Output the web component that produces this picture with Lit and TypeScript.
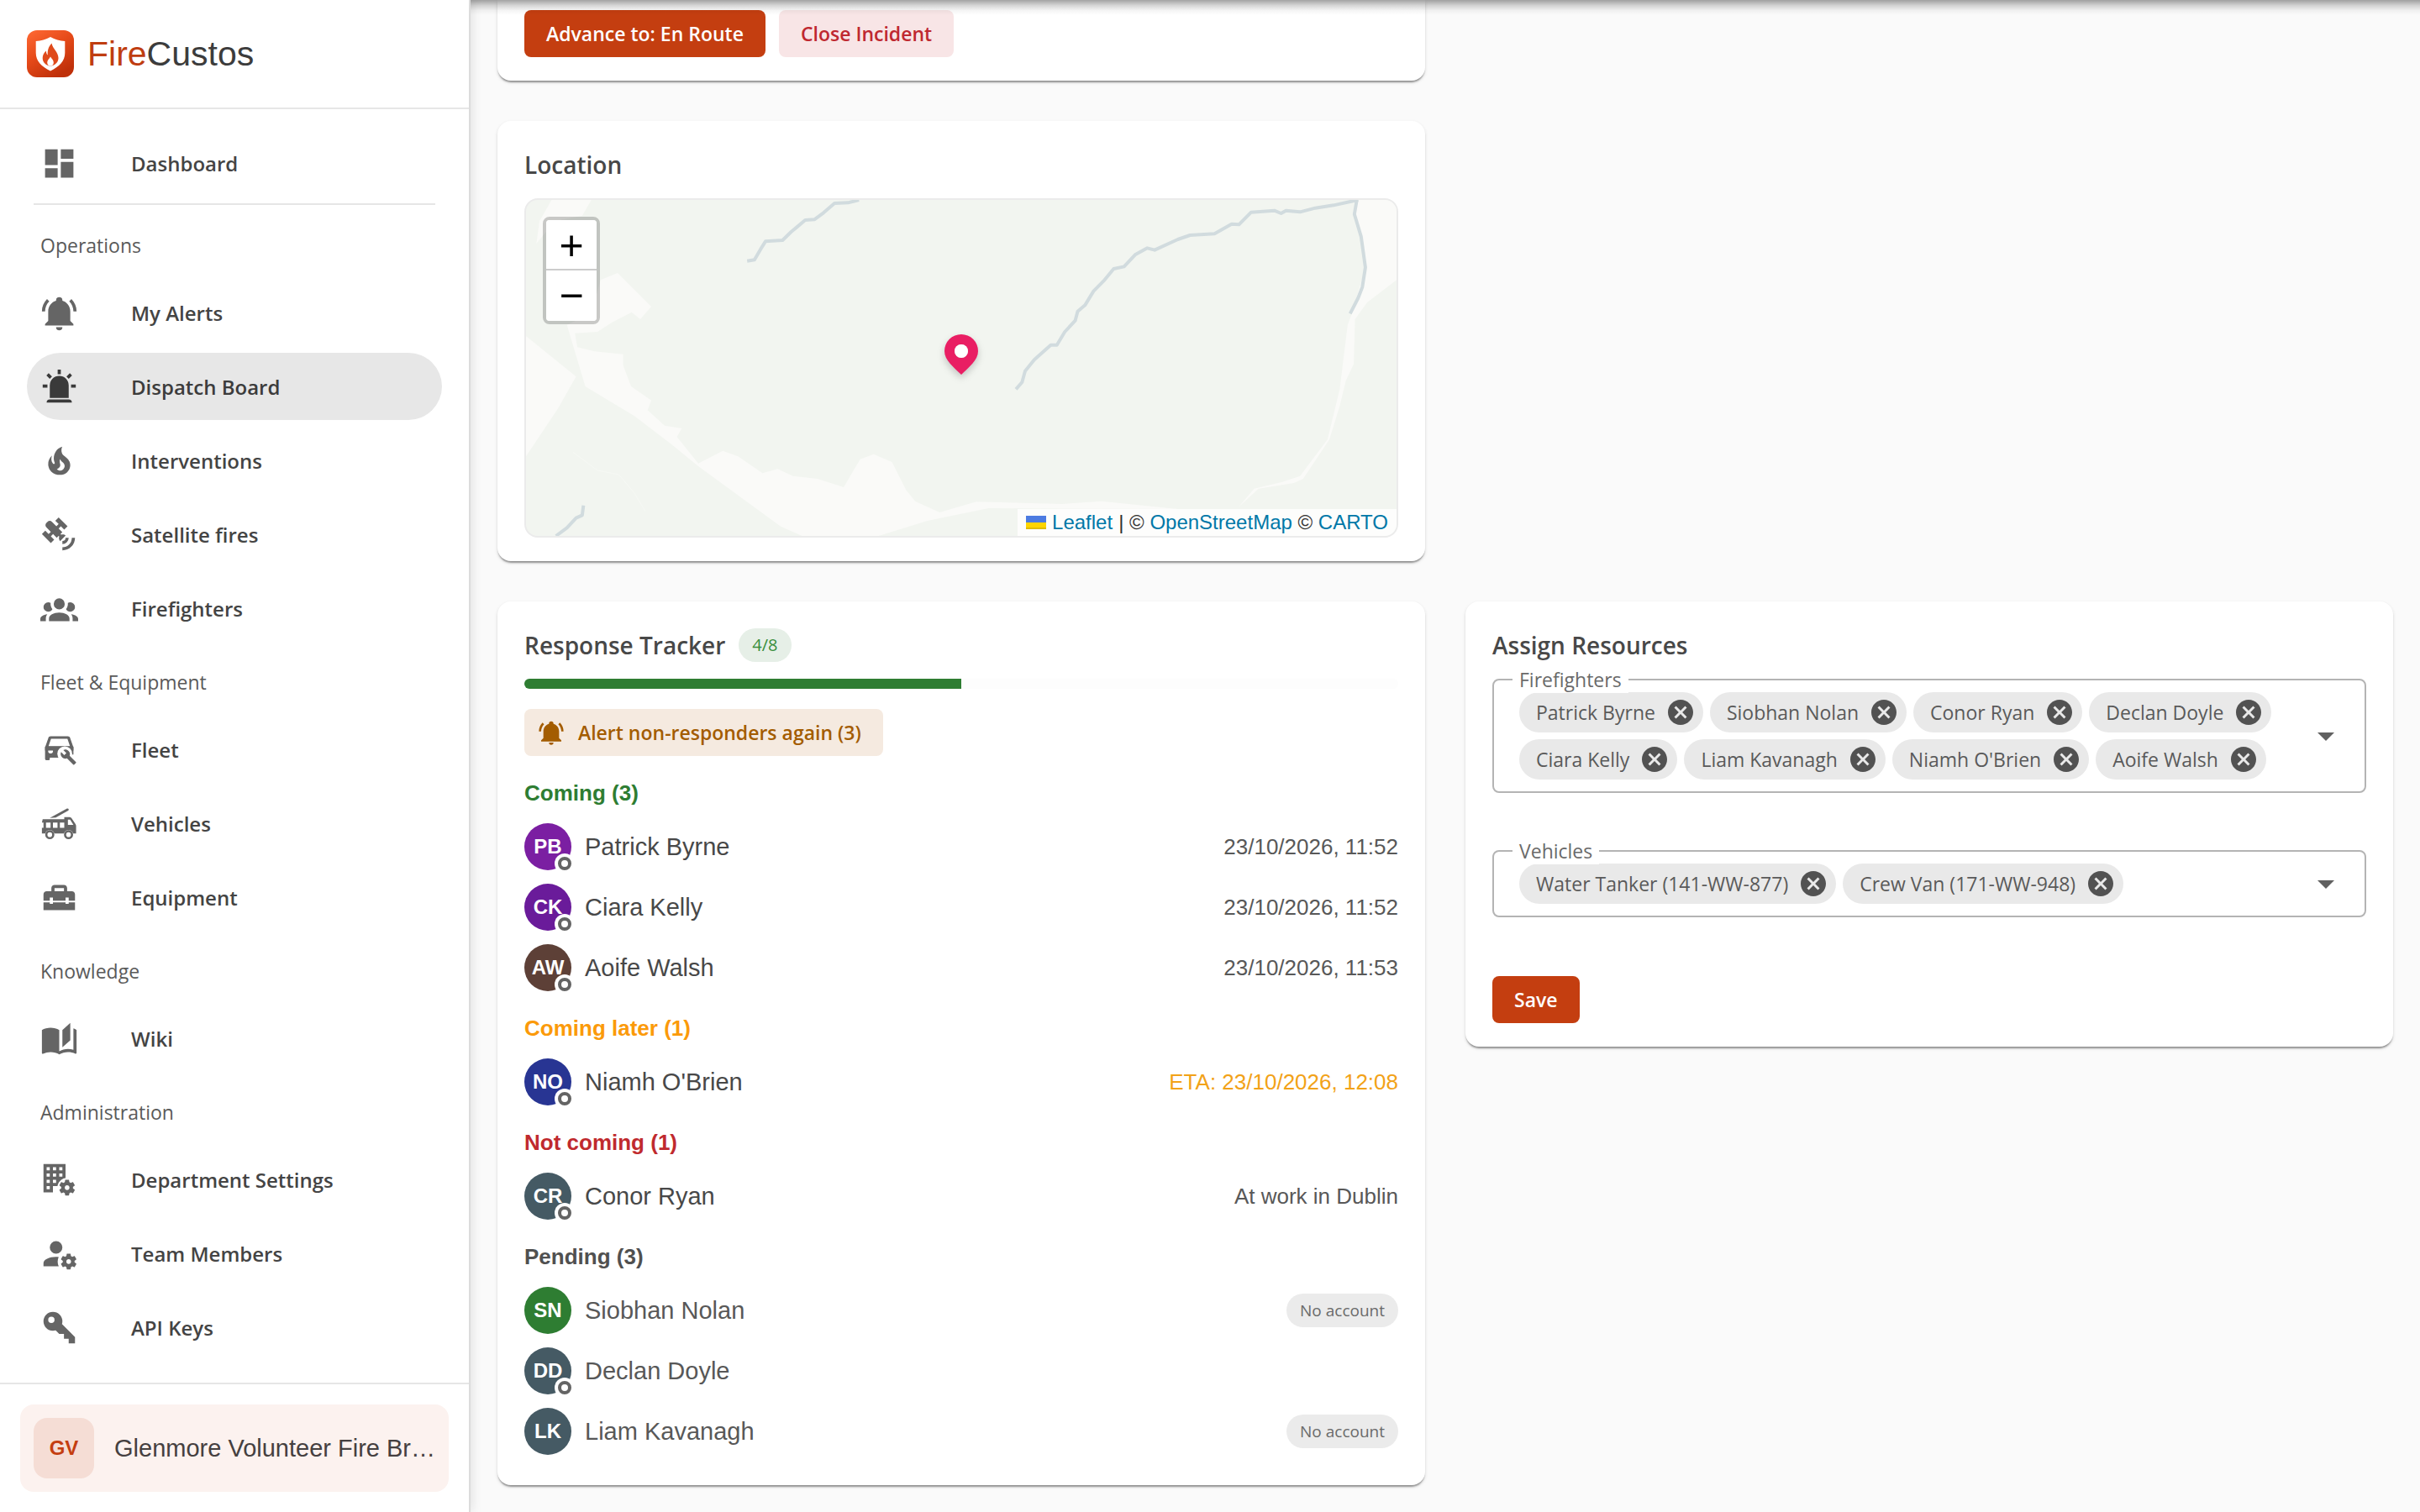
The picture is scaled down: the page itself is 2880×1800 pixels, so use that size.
import { LitElement, html, css, svg, nothing } from "lit";
import { customElement, property, state } from "lit/decorators.js";
import { classMap } from "lit/directives/class-map.js";

const cog =
  "M17 12C16.87 12 16.76 12.09 16.74 12.21L16.55 13.53C16.25 13.66 15.96 13.82 15.7 14L14.46 13.5C14.35 13.5 14.22 13.5 14.15 13.63L13.15 15.36C13.09 15.47 13.11 15.6 13.21 15.68L14.27 16.5C14.25 16.67 14.24 16.83 14.24 17C14.24 17.17 14.25 17.33 14.27 17.5L13.21 18.32C13.12 18.4 13.09 18.53 13.15 18.64L14.15 20.37C14.21 20.5 14.34 20.5 14.46 20.5L15.7 20C15.96 20.18 16.24 20.35 16.55 20.47L16.74 21.79C16.76 21.91 16.86 22 17 22H19C19.11 22 19.22 21.91 19.24 21.79L19.43 20.47C19.73 20.34 20 20.18 20.27 20L21.5 20.5C21.63 20.5 21.76 20.5 21.83 20.37L22.83 18.64C22.89 18.53 22.86 18.4 22.77 18.32L21.7 17.5C21.72 17.33 21.74 17.17 21.74 17C21.74 16.83 21.73 16.67 21.7 16.5L22.76 15.68C22.85 15.6 22.88 15.47 22.82 15.36L21.82 13.63C21.76 13.5 21.63 13.5 21.5 13.5L20.27 14C20 13.82 19.73 13.65 19.42 13.53L19.23 12.21C19.22 12.09 19.11 12 19 12H17M18 15.5C18.83 15.5 19.5 16.17 19.5 17C19.5 17.83 18.83 18.5 18 18.5C17.16 18.5 16.5 17.83 16.5 17C16.5 16.17 17.17 15.5 18 15.5Z";

const icons: Record<string, unknown> = {
  dashboard: svg`<path d="M13,3V9H21V3M13,21H21V11H13M3,21H11V15H3M3,13H11V3H3V13Z"/>`,
  bell: svg`<path d="M21,19V20H3V19L5,17V11C5,7.9 7.03,5.17 10,4.29C10,4.19 10,4.1 10,4A2,2 0 0,1 12,2A2,2 0 0,1 14,4C14,4.1 14,4.19 14,4.29C16.97,5.17 19,7.9 19,11V17L21,19M14,21A2,2 0 0,1 12,23A2,2 0 0,1 10,21M19.75,3.19L18.33,4.61C20.04,6.3 21,8.6 21,11H23C23,8.07 21.84,5.25 19.75,3.19M1,11H3C3,8.6 3.96,6.3 5.67,4.61L4.25,3.19C2.16,5.25 1,8.07 1,11Z"/>`,
  alarm: svg`<path d="M6,6.9L3.87,4.78L5.28,3.37L7.4,5.5L6,6.9M13,1V4H11V1H13M20.13,4.78L18,6.9L16.6,5.5L18.72,3.37L20.13,4.78M4.5,10.5V12.5H1.5V10.5H4.5M19.5,10.5H22.5V12.5H19.5V10.5M6,20H18A2,2 0 0,1 20,22H4A2,2 0 0,1 6,20M12,5A6,6 0 0,1 18,11V19H6V11A6,6 0 0,1 12,5Z"/>`,
  fire: svg`<path d="M17.66 11.2C17.43 10.9 17.15 10.64 16.89 10.38C16.22 9.78 15.46 9.35 14.82 8.72C13.33 7.26 13 4.85 13.95 3C13 3.23 12.17 3.75 11.46 4.32C8.87 6.4 7.85 10.07 9.07 13.22C9.11 13.32 9.15 13.42 9.15 13.55C9.15 13.77 9 13.97 8.8 14.05C8.57 14.15 8.33 14.09 8.14 13.93C8.08 13.88 8.04 13.83 8 13.76C6.87 12.33 6.69 10.28 7.45 8.64C5.78 10 4.87 12.3 5 14.47C5.06 14.97 5.12 15.47 5.29 15.97C5.43 16.57 5.7 17.17 6 17.7C7.08 19.43 8.95 20.67 10.96 20.92C13.1 21.19 15.39 20.8 17.03 19.32C18.86 17.66 19.5 15 18.56 12.72L18.43 12.46C18.22 12 17.66 11.2 17.66 11.2M14.5 17.5C14.22 17.74 13.76 18 13.4 18.1C12.28 18.5 11.16 17.94 10.5 17.28C11.69 17 12.4 16.12 12.61 15.23C12.78 14.43 12.46 13.77 12.33 13C12.21 12.26 12.23 11.63 12.5 10.94C12.69 11.32 12.89 11.7 13.13 12C13.9 13 15.11 13.44 15.37 14.8C15.41 14.94 15.43 15.08 15.43 15.23C15.46 16.05 15.1 16.95 14.5 17.5Z"/>`,
  satellite: svg`<path d="M11.62,1L17.28,6.67L15.16,8.79L13.04,6.67L11.62,8.09L13.95,10.41L12.79,11.58L13.24,12.04C14.17,11.61 15.31,11.77 16.07,12.54L12.54,16.07C11.77,15.31 11.61,14.17 12.04,13.24L11.58,12.79L10.41,13.95L8.09,11.62L6.67,13.04L8.79,15.16L6.67,17.28L1,11.62L3.14,9.5L5.26,11.62L6.67,10.21L3.84,7.38C3.06,6.6 3.06,5.33 3.84,4.55L4.55,3.84C5.33,3.06 6.6,3.06 7.38,3.84L10.21,6.67L11.62,5.26L9.5,3.14L11.62,1M18,14A4,4 0 0,1 14,18V16A2,2 0 0,0 16,14H18M22,14A8,8 0 0,1 14,22V20A6,6 0 0,0 20,14H22Z"/>`,
  group: svg`<path d="M12,5.5A3.5,3.5 0 0,1 15.5,9A3.5,3.5 0 0,1 12,12.5A3.5,3.5 0 0,1 8.5,9A3.5,3.5 0 0,1 12,5.5M5,8C5.56,8 6.08,8.15 6.53,8.42C6.38,9.85 6.8,11.27 7.66,12.38C7.16,13.34 6.16,14 5,14A3,3 0 0,1 2,11A3,3 0 0,1 5,8M19,8A3,3 0 0,1 22,11A3,3 0 0,1 19,14C17.84,14 16.84,13.34 16.34,12.38C17.2,11.27 17.62,9.85 17.47,8.42C17.92,8.15 18.44,8 19,8M5.5,18.25C5.5,16.18 8.41,14.5 12,14.5C15.59,14.5 18.5,16.18 18.5,18.25V20H5.5V18.25M0,20V18.5C0,17.11 1.89,15.94 4.45,15.6C3.86,16.28 3.5,17.22 3.5,18.25V20H0M24,20H20.5V18.25C20.5,17.22 20.14,16.28 19.55,15.6C22.11,15.94 24,17.11 24,18.5V20Z"/>`,
  fleet: svg`<path fill-rule="evenodd" d="M6.5 3.5H17.5C18.2 3.5 18.7 3.9 18.9 4.5L21 10.5V12.5H3V10.5L5.1 4.5C5.3 3.9 5.8 3.5 6.5 3.5M6.8 5L5.2 9.7H18.8L17.2 5Z"/>
    <path fill-rule="evenodd" d="M3 10H21V15H14V17H6V17.8C6 18.3 5.6 18.7 5 18.7H4C3.4 18.7 3 18.3 3 17.7ZM6.5 11.3A1.5 1.5 0 1 0 6.5 14.4A1.5 1.5 0 1 0 6.5 11.3"/>
    <circle cx="15.5" cy="14.5" r="4.7" fill="#fff"/><path d="M15 13L24 22L22 24L13 16Z" fill="#fff"/>
    <path d="M22.6 19.8L18.6 15.9C19 14.9 18.8 13.7 17.9 12.8C17 11.9 15.700 11.7 14.600 12.200L16.500 14.100L15.200 15.500L13.200 13.500C12.600 14.600 12.900 15.900 13.800 16.800C14.700 17.700 15.900 17.900 16.900 17.500L20.900 21.400C21.100 21.600 21.400 21.600 21.500 21.400L22.600 20.400C22.800 20.200 22.800 19.900 22.600 19.800Z"/>`,
  truck: svg`<path d="M6 8.400L16.700 2.500C17.700 2 18.500 3 17.700 3.700L9.800 8.100Z"/>
    <path fill-rule="evenodd" d="M1.500 9.200H15.200V7.800H18.300C19 7.800 19.500 8.100 19.900 8.600L22.300 12.200C22.600 12.600 22.700 13 22.700 13.500V18.300H20.800A3 3 0 0 0 15 18.300H8.900A3 3 0 0 0 3.100 18.300H1V14.700H2V11.300H1ZM3.600 11.300V14.600H6.500V11.300ZM8 11.300V14.600H10.900V11.300ZM12.400 11.300V14.600H15.200V11.300ZM17.500 9.500V12.800H21L18.900 9.500Z"/>
    <path fill-rule="evenodd" d="M6 16.100A2.900 2.900 0 1 0 6 21.900A2.900 2.900 0 1 0 6 16.100M6 17.500A1.500 1.500 0 1 1 6 20.500A1.500 1.500 0 1 1 6 17.500M17.900 16.100A2.900 2.900 0 1 0 17.900 21.900A2.900 2.900 0 1 0 17.900 16.100M17.900 17.500A1.500 1.500 0 1 1 17.900 20.500A1.500 1.500 0 1 1 17.900 17.500"/>`,
  toolbox: svg`<path d="M18 16H16V15H8V16H6V15H2V20H22V15H18V16M20 8H17V6C17 4.900 16.100 4 15 4H9C7.900 4 7 4.900 7 6V8H4C2.900 8 2 8.900 2 10V14H6V12H8V14H16V12H18V14H22V10C22 8.900 21.100 8 20 8M15 8H9V6H15V8Z"/>`,
  book: svg`<path d="M19 2L14 6.500V17.500L19 13V2M6.500 5C4.550 5 2.450 5.400 1 6.500V21.160C1 21.410 1.250 21.660 1.500 21.660C1.600 21.660 1.650 21.590 1.750 21.590C3.100 20.940 5.050 20.500 6.500 20.500C8.450 20.500 10.550 20.900 12 22C13.350 21.150 15.800 20.500 17.500 20.500C19.150 20.500 20.850 20.810 22.250 21.560C22.350 21.610 22.400 21.590 22.500 21.590C22.750 21.590 23 21.340 23 21.090V6.500C22.400 6.050 21.750 5.750 21 5.500V19C19.900 18.650 18.700 18.500 17.500 18.500C15.800 18.500 13.350 19.150 12 20V6.500C10.550 5.400 8.450 5 6.500 5Z"/>`,
  office: svg`<path fill-rule="evenodd" d="M2 2H16V20H2ZM4 4V6H6V4ZM8 4V6H10V4ZM12 4V6H14V4ZM4 8V10H6V8ZM8 8V10H10V8ZM12 8V10H14V8ZM4 12V14H6V12ZM8 12V14H10V12ZM4 16V18H6V16Z"/>
    <circle cx="17" cy="17" r="6.200" fill="#fff"/><path d="M8 16H12V21H8Z" fill="#fff"/><path transform="translate(-1 0)" d="${cog}"/>`,
  team: svg`<path d="M10 4A4 4 0 0 0 6 8A4 4 0 0 0 10 12A4 4 0 0 0 14 8A4 4 0 0 0 10 4M10 14C5.580 14 2 15.790 2 18V20H11.680A7 7 0 0 1 11 17A7 7 0 0 1 11.640 14.090C11.110 14.030 10.560 14 10 14Z"/><path d="${cog}"/>`,
  key: svg`<path d="M22,18V22H18V19H15V16H12L9.740,13.740C9.190,13.910 8.610,14 8,14A6,6 0 0,1 2,8A6,6 0 0,1 8,2A6,6 0 0,1 14,8C14,8.610 13.910,9.190 13.740,9.740L22,18M7,5A2,2 0 0,0 5,7A2,2 0 0,0 7,9A2,2 0 0,0 9,7A2,2 0 0,0 7,5Z"/>`,
  close: svg`<path d="M12,2C17.530,2 22,6.470 22,12C22,17.530 17.530,22 12,22C6.470,22 2,17.530 2,12C2,6.470 6.470,2 12,2M15.590,7L12,10.590L8.410,7L7,8.410L10.590,12L7,15.590L8.410,17L12,13.410L15.590,17L17,15.590L13.410,12L17,8.410L15.590,7Z"/>`,
  caret: svg`<path d="M7,10L12,15L17,10H7Z"/>`,
};

const icon = (name: string) =>
  html`<svg class="icon" viewBox="0 0 24 24" fill="currentColor" aria-hidden="true">${icons[name]}</svg>`;

const reset = css`
  *, *::before, *::after { box-sizing: border-box; }
  h2, h3, p, ul { margin: 0; padding: 0; }
  ul { list-style: none; }
  a { color: inherit; text-decoration: none; }
  button { border: 0; background: none; color: inherit; font: inherit; padding: 0; margin: 0; cursor: pointer; text-align: inherit; }
  svg { display: block; flex: none; }
`;

interface NavItem { icon: string; label: string; active?: boolean }
interface NavGroup { title?: string; items: NavItem[] }

const navGroups: NavGroup[] = [
  { items: [{ icon: "dashboard", label: "Dashboard" }] },
  {
    title: "Operations",
    items: [
      { icon: "bell", label: "My Alerts" },
      { icon: "alarm", label: "Dispatch Board", active: true },
      { icon: "fire", label: "Interventions" },
      { icon: "satellite", label: "Satellite fires" },
      { icon: "group", label: "Firefighters" },
    ],
  },
  {
    title: "Fleet & Equipment",
    items: [
      { icon: "fleet", label: "Fleet" },
      { icon: "truck", label: "Vehicles" },
      { icon: "toolbox", label: "Equipment" },
    ],
  },
  { title: "Knowledge", items: [{ icon: "book", label: "Wiki" }] },
  {
    title: "Administration",
    items: [
      { icon: "office", label: "Department Settings" },
      { icon: "team", label: "Team Members" },
      { icon: "key", label: "API Keys" },
    ],
  },
];

@customElement("side-nav")
export class SideNav extends LitElement {
  static styles = [
    reset,
    css`
      :host {
        display: flex;
        flex-direction: column;
        background: #fff;
        border-right: 2px solid #dcdcdc;
        box-shadow: 2px 0 12px rgba(0, 0, 0, 0.1);
        color: #444;
        font-family: "Open Sans", "Noto Sans", sans-serif;
      }
      .brand {
        display: flex;
        align-items: center;
        gap: 16px;
        padding: 36px 32px;
        border-bottom: 2px solid #e6e6e6;
        font: 41px/56px "Liberation Sans", Arial, sans-serif;
        color: #3c3c3c;
      }
      .brand .logo { width: 56px; height: 56px; }
      .fire { color: #bf3d10; }
      nav { flex: 1; padding: 24px 32px 0; }
      .rule { height: 2px; margin: 0 8px 8px; background: #e6e6e6; }
      .section { font-size: 23px; font-weight: 400; line-height: 80px; padding-left: 16px; color: #5a5a5a; }
      .item {
        display: flex;
        align-items: center;
        gap: 63px;
        height: 80px;
        margin-bottom: 8px;
        padding: 0 16px;
        border-radius: 40px;
        font-size: 24px;
        font-weight: 600;
      }
      .item .icon { width: 45px; height: 45px; color: #656565; }
      .active { background: #e7e7e7; color: #3c3c3c; }
      .active .icon { color: #3a3a3a; }
      .foot { padding: 24px; border-top: 2px solid #e6e6e6; }
      .dept {
        display: flex;
        align-items: center;
        gap: 24px;
        width: 100%;
        padding: 16px 8px 16px 16px;
        border-radius: 16px;
        background: #fcf2ef;
        font: 29px/72px "Liberation Sans", Arial, sans-serif;
        color: #454040;
      }
      .badge {
        flex: none;
        width: 72px;
        border-radius: 16px;
        background: #f5ddd5;
        color: #c43e10;
        font-size: 24px;
        font-weight: 700;
        text-align: center;
      }
      .name { white-space: nowrap; }
    `,
  ];

  render() {
    return html`
      <a class="brand" href="#home">
        <svg class="logo" viewBox="0 0 56 56" aria-hidden="true">
          <defs>
            <linearGradient id="g" x1="0" y1="0" x2="0.600" y2="1">
              <stop offset="0" stop-color="#ff6a35" />
              <stop offset="0.500" stop-color="#e64a19" />
              <stop offset="1" stop-color="#bf300a" />
            </linearGradient>
          </defs>
          <rect width="56" height="56" rx="12" fill="url(#g)" />
          <path d="M28 8C33.500 11.200 39 12.800 45.300 13V27C45.300 36.500 38.500 43.500 28 48.500C17.500 43.500 10.700 36.500 10.700 27V13C17 12.800 22.500 11.200 28 8Z" fill="#fff" />
          <path d="M29.500 15.500C30.500 22 37.500 26 37.500 33C37.500 38 34 41.500 28 43C22 41.500 18.700 38 18.700 33C18.700 29.500 20.500 26.500 22.800 24.500C23 27 23.500 28.500 24.800 29.500C24.300 24 26 19 29.500 15.500Z" fill="#df4a1b" />
          <path d="M28 31.500C29.500 34 31.800 35.500 31.800 38.500C31.800 41 30 42.800 28 42.800C26 42.800 24.200 41 24.200 38.500C24.200 35.500 26.800 34 28 31.500Z" fill="#fff" />
        </svg>
        <span><span class="fire">Fire</span>Custos</span>
      </a>
      <nav>
        ${navGroups.map(
          (g) => html`
            ${g.title ? html`<h2 class="section">${g.title}</h2>` : nothing}
            ${g.items.map(
              (i) => html`<a
                class=${classMap({ item: true, active: !!i.active })}
                href="#${i.icon}"
                aria-current=${i.active ? "page" : nothing}
                >${icon(i.icon)}<span>${i.label}</span></a
              >`
            )}
            ${g.title ? nothing : html`<div class="rule"></div>`}
          `
        )}
      </nav>
      <div class="foot">
        <button class="dept">
          <span class="badge">GV</span><span class="name">Glenmore Volunteer Fire Br…</span>
        </button>
      </div>
    `;
  }
}

@customElement("location-map")
export class LocationMap extends LitElement {
  static styles = [
    reset,
    css`
      :host {
        display: block;
        position: relative;
        height: 404px;
        border: 2px solid #ebebeb;
        border-radius: 16px;
        overflow: hidden;
        background: #f2f5f0;
        font-family: "Liberation Sans", Arial, sans-serif;
      }
      .terrain { width: 100%; height: 100%; }
      .clearing { fill: #fafaf8; }
      .river { fill: none; stroke: #d1dbde; stroke-width: 4px; stroke-linejoin: round; }
      .track { fill: none; stroke: #f6f8f4; stroke-width: 1px; }
      .zoom {
        position: absolute;
        top: 20px;
        left: 20px;
        display: flex;
        flex-direction: column;
        border: 4px solid rgba(0, 0, 0, 0.2);
        border-radius: 8px;
        background-clip: padding-box;
      }
      .zoom button { width: 60px; height: 60px; background: #fff; color: #000; font-size: 50px; line-height: 60px; text-align: center; }
      .zoom button:first-child { border-bottom: 2px solid #ccc; border-radius: 4px 4px 0 0; }
      .zoom button:last-child { border-radius: 0 0 4px 4px; }
      .pin {
        position: absolute;
        top: 40%;
        left: 50%;
        width: 40px;
        height: 48px;
        margin-left: -20px;
        filter: drop-shadow(0 4px 4px rgba(0, 0, 0, 0.2));
      }
      .credit {
        position: absolute;
        right: 0;
        bottom: 0;
        display: flex;
        align-items: center;
        gap: 7px;
        padding: 0 10px;
        background: rgba(255, 255, 255, 0.8);
        font-size: 24px;
        line-height: 32px;
        color: #333;
      }
      .credit a { color: #0078a8; }
      .flag { width: 24px; height: 16px; }
      .lead { display: flex; align-items: center; gap: 7px; }
    `,
  ];

  render() {
    return html`
      <svg class="terrain" viewBox="63 114 1425 1200" preserveAspectRatio="none" aria-hidden="true">
        <path class="clearing" d="M105 114H170L155 170L120 185L95 230L80 270L85 190Z" />
        <path class="clearing" d="M63 600L145 745L115 860L63 1030Z" />
        <path class="clearing" d="M213 375L268 495L250 540L236 515L205 550L180 585L143 590L147 640L175 655L222 665V705L235 780L268 830L262 865L290 920L318 930L310 960L345 1055L385 1010L410 1030L450 1090L475 1075L500 1100L540 1110L583 1140L610 1040L632 1022L662 1050L685 1150L700 1190L740 1230L800 1192L940 1200L1005 1190L1130 1218L820 1215L720 1260L640 1314H515L480 1280L345 1065L300 985L240 885L160 780L130 560L170 520L185 400Z" />
        <path class="clearing" d="M1425 114H1488V400L1440 480L1420 540L1418 700L1405 760L1395 850L1378 970L1335 1110L1320 1125L1262 1145L1230 1210L1255 1145L1300 1122L1330 1100L1375 970L1395 790L1408 560L1415 520L1437 355L1430 245L1419 165Z" />
        <path class="track" vector-effect="non-scaling-stroke" d="M140 1015L180 1080L215 1095L240 1160L258 1225" />
        <path class="river" vector-effect="non-scaling-stroke" d="M425 332L437 328L447 290L455 262L483 258L497 228L506 212L520 186L535 184L550 160L568 126L590 124L608 114" />
        <path class="river" vector-effect="non-scaling-stroke" d="M1425 114L1385 133L1355 143L1330 157L1307 152L1299 162L1288 152L1250 158L1230 202L1218 200L1190 235L1150 240L1130 255L1092 293L1080 286L1060 310L1042 352L1025 360L1010 400L992 440L978 490L966 512L962 545L945 585L932 632L922 632L895 685L880 725L875 765L865 790" />
        <path class="river" vector-effect="non-scaling-stroke" d="M1423 114L1419 165L1430 245L1437 355L1432 425L1425 465L1412 520" />
        <path class="river" vector-effect="non-scaling-stroke" d="M157 1205L155 1240L145 1250L130 1285L112 1314" />
      </svg>
      <div class="zoom">
        <button aria-label="Zoom in">+</button>
        <button aria-label="Zoom out">−</button>
      </div>
      <svg class="pin" viewBox="0 0 40 48" aria-hidden="true">
        <path fill="#e91e63" fill-rule="evenodd" d="M20 0A20 20 0 0 1 40 20C40 31 29 39 20 48C11 39 0 31 0 20A20 20 0 0 1 20 0M20 12A8 8 0 1 0 20 28A8 8 0 1 0 20 12" />
        <circle cx="20" cy="20" r="8" fill="#fff" />
      </svg>
      <div class="credit">
        <a class="lead" href="#leaflet"
          ><svg class="flag" viewBox="0 0 24 16" aria-hidden="true">
            <rect width="24" height="8" fill="#4c7be1" /><rect y="8" width="24" height="6" fill="#ffd500" /><rect y="14" width="24" height="2" fill="#e0bc00" /></svg
          >Leaflet</a
        >
        <span>| © <a href="#osm">OpenStreetMap</a> © <a href="#carto">CARTO</a></span>
      </div>
    `;
  }
}

@customElement("chip-select")
export class ChipSelect extends LitElement {
  @property() label = "";
  @property({ attribute: false }) values: string[] = [];

  static styles = [
    reset,
    css`
      :host { display: block; position: relative; font-family: "Open Sans", "Noto Sans", sans-serif; color: #5a5a5a; }
      .label {
        position: absolute;
        top: -15px;
        left: 24px;
        padding: 0 8px;
        background: #fff;
        color: #6a6a6a;
        font-size: 23px;
        line-height: 32px;
      }
      .control {
        display: flex;
        align-items: center;
        padding: 14px 22px 14px 30px;
        border: 2px solid #b4b4b4;
        border-radius: 8px;
      }
      .chips { flex: 1; min-width: 0; display: flex; flex-wrap: wrap; gap: 8px; }
      .chip {
        display: flex;
        align-items: center;
        height: 48px;
        padding: 0 9px 0 20px;
        gap: 12px;
        border-radius: 24px;
        background: #e9e9e9;
        font-size: 23px;
        white-space: nowrap;
      }
      .chip .icon { width: 36px; height: 36px; color: #525252; }
      .entry { flex: 1 1 0; width: 0; min-width: 0; height: 48px; padding: 0; border: 0; outline: 0; background: none; font: inherit; }
      .toggle .icon { width: 48px; height: 48px; color: #606060; }
    `,
  ];

  private remove(value: string) {
    this.values = this.values.filter((v) => v !== value);
  }

  render() {
    return html`
      <label class="label" for="entry">${this.label}</label>
      <div class="control">
        <div class="chips">
          ${this.values.map(
            (v) => html`<span class="chip"
              >${v}<button aria-label="Remove ${v}" @click=${() => this.remove(v)}>${icon("close")}</button></span
            >`
          )}
          <input class="entry" id="entry" type="text" role="combobox" aria-expanded="false" />
        </div>
        <button class="toggle" aria-label="Open ${this.label}">${icon("caret")}</button>
      </div>
    `;
  }
}

interface Person { initials: string; name: string; color: string; note?: string; linked?: boolean; chip?: string }
interface Group { title: string; tone: string; people: Person[] }

const groups: Group[] = [
  {
    title: "Coming",
    tone: "yes",
    people: [
      { initials: "PB", name: "Patrick Byrne", color: "#7b1fa2", note: "23/10/2026, 11:52", linked: true },
      { initials: "CK", name: "Ciara Kelly", color: "#6a1b9a", note: "23/10/2026, 11:52", linked: true },
      { initials: "AW", name: "Aoife Walsh", color: "#5d4037", note: "23/10/2026, 11:53", linked: true },
    ],
  },
  {
    title: "Coming later",
    tone: "later",
    people: [{ initials: "NO", name: "Niamh O'Brien", color: "#283593", note: "ETA: 23/10/2026, 12:08", linked: true }],
  },
  {
    title: "Not coming",
    tone: "no",
    people: [{ initials: "CR", name: "Conor Ryan", color: "#455a64", note: "At work in Dublin", linked: true }],
  },
  {
    title: "Pending",
    tone: "pending",
    people: [
      { initials: "SN", name: "Siobhan Nolan", color: "#2e7d32", chip: "No account" },
      { initials: "DD", name: "Declan Doyle", color: "#455a64", linked: true },
      { initials: "LK", name: "Liam Kavanagh", color: "#455a64", chip: "No account" },
    ],
  },
];

@customElement("response-tracker")
export class ResponseTracker extends LitElement {
  @state() private answered = 4;
  @state() private total = 8;

  static styles = [
    reset,
    css`
      :host { display: block; font-family: "Liberation Sans", Arial, sans-serif; color: #484848; }
      .head { display: flex; align-items: center; gap: 16px; height: 48px; margin-bottom: 16px; }
      .title { font: 600 28px/48px "Open Sans", "Noto Sans", sans-serif; color: #484848; }
      .count {
        padding: 0 16px;
        border-radius: 20px;
        background: #e6efe7;
        color: #388e3c;
        font: 20px/40px "Open Sans", "Noto Sans", sans-serif;
      }
      .track { height: 12px; border-radius: 6px; background: #fdfdfd; overflow: hidden; }
      .fill { height: 100%; background: #2e7d32; }
      .again {
        display: flex;
        align-items: center;
        gap: 16px;
        height: 56px;
        margin-top: 24px;
        padding: 0 26px 0 16px;
        border-radius: 8px;
        background: #f5eae0;
        color: #a35c00;
        font: 600 23px/56px "Open Sans", "Noto Sans", sans-serif;
      }
      .again .icon { width: 32px; height: 32px; }
      .group { margin: 16px 0 8px; font-size: 26px; font-weight: 700; line-height: 40px; }
      .again + .group { margin-top: 24px; }
      .yes { color: #2e7d32; }
      .later { color: #fb9a0a; }
      .no { color: #c02a2e; }
      .pending { color: #505050; }
      .row { display: flex; align-items: center; gap: 16px; height: 72px; }
      .avatar {
        position: relative;
        flex: none;
        width: 56px;
        border-radius: 50%;
        color: #fff;
        font-size: 24px;
        font-weight: 700;
        line-height: 56px;
        text-align: center;
      }
      .dot {
        position: absolute;
        right: 0;
        bottom: 0;
        width: 16px;
        height: 16px;
        border: 4px solid #646464;
        border-radius: 50%;
        background: #fff;
        box-shadow: 0 0 0 4px #fff;
      }
      .name { flex: 1; font-size: 29px; line-height: 40px; }
      .waiting .name { color: #585858; }
      .note { font-size: 26px; line-height: 32px; color: #585858; }
      .note.later { color: #f2a218; }
      .tag {
        padding: 0 16px;
        border-radius: 20px;
        background: #ebebeb;
        color: #6a6a6a;
        font: 19px/40px "Open Sans", "Noto Sans", sans-serif;
      }
    `,
  ];

  render() {
    return html`
      <div class="head">
        <h2 class="title">Response Tracker</h2>
        <span class="count">${this.answered}/${this.total}</span>
      </div>
      <div class="track" role="progressbar" aria-valuenow=${this.answered} aria-valuemax=${this.total}>
        <div class="fill" style="width:${(this.answered / this.total) * 100}%"></div>
      </div>
      <button class="again">${icon("bell")}<span>Alert non-responders again (3)</span></button>
      ${groups.map(
        (g) => html`
          <h3 class="group ${g.tone}">${g.title} (${g.people.length})</h3>
          <ul class=${classMap({ waiting: g.tone === "pending" })}>
            ${g.people.map(
              (p) => html`<li class="row">
                <span class="avatar" style="background:${p.color}">${p.initials}${p.linked ? html`<span class="dot"></span>` : nothing}</span>
                <span class="name">${p.name}</span>
                ${p.note ? html`<span class="note ${g.tone === "later" ? "later" : ""}">${p.note}</span>` : nothing}
                ${p.chip ? html`<span class="tag">${p.chip}</span>` : nothing}
              </li>`
            )}
          </ul>
        `
      )}
    `;
  }
}

@customElement("app-root")
export class AppRoot extends LitElement {
  private firefighters = [
    "Patrick Byrne", "Siobhan Nolan", "Conor Ryan", "Declan Doyle",
    "Ciara Kelly", "Liam Kavanagh", "Niamh O'Brien", "Aoife Walsh",
  ];
  private vehicles = ["Water Tanker (141-WW-877)", "Crew Van (171-WW-948)"];

  static styles = [
    reset,
    css`
      :host {
        display: grid;
        grid-template-columns: 560px minmax(0, 1fr);
        min-height: 100vh;
        background: #fafafa;
        font-family: "Open Sans", "Noto Sans", sans-serif;
        color: #484848;
      }
      side-nav { position: relative; z-index: 1; }
      main {
        position: relative;
        display: grid;
        grid-template-columns: repeat(2, minmax(0, 1fr));
        align-content: start;
        align-items: start;
        gap: 48px;
        padding: 0 32px 32px;
      }
      .topshade {
        position: absolute;
        top: 0;
        left: 0;
        right: 0;
        height: 18px;
        background: linear-gradient(rgba(0, 0, 0, 0.36), rgba(0, 0, 0, 0.16) 36%, rgba(0, 0, 0, 0.04) 70%, transparent);
      }
      .card {
        grid-column: 1;
        padding: 28px 32px;
        border-radius: 16px;
        background: #fff;
        box-shadow: 0 3px 2px -1px rgba(0, 0, 0, 0.36), 0 2px 4px rgba(0, 0, 0, 0.12);
      }
      .status { display: flex; gap: 16px; padding-top: 12px; border-radius: 0 0 16px 16px; }
      .assign { grid-column: 2; }
      .title { font-size: 28px; font-weight: 600; line-height: 48px; margin-bottom: 16px; }
      .btn { height: 56px; padding: 0 26px; border-radius: 8px; font-size: 23px; font-weight: 600; line-height: 56px; }
      .primary { background: #c43e10; color: #fff; }
      .danger { background: #f8e5e6; color: #bf2830; }
      .fields { display: flex; flex-direction: column; gap: 68px; margin-bottom: 70px; }
    `,
  ];

  render() {
    return html`
      <side-nav></side-nav>
      <main>
        <section class="card status">
          <button class="btn primary">Advance to: En Route</button>
          <button class="btn danger">Close Incident</button>
        </section>
        <section class="card">
          <h2 class="title">Location</h2>
          <location-map></location-map>
        </section>
        <section class="card">
          <response-tracker></response-tracker>
        </section>
        <section class="card assign">
          <h2 class="title">Assign Resources</h2>
          <div class="fields">
            <chip-select label="Firefighters" .values=${this.firefighters}></chip-select>
            <chip-select label="Vehicles" .values=${this.vehicles}></chip-select>
          </div>
          <button class="btn primary">Save</button>
        </section>
        <div class="topshade"></div>
      </main>
    `;
  }
}
